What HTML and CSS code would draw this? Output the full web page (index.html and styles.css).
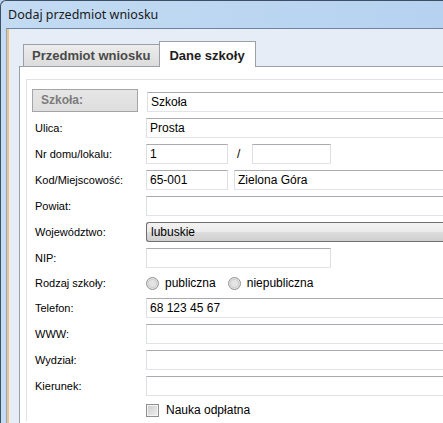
FILE: index.html
```html
<!DOCTYPE html>
<html lang="pl">
<head>
  <meta charset="UTF-8">
  <title>Dodaj przedmiot wniosku</title>
  <link rel="stylesheet" href="styles.css">
</head>
<body>
  <div class="window">
    <div class="titlebar">Dodaj przedmiot wniosku</div>
    <div class="frame">
      <div class="client">
        <div class="tabs">
          <span class="tab">Przedmiot wniosku</span>
          <span class="tab active">Dane szkoły</span>
        </div>
        <div class="panel">
          <div class="group">
            <div class="row">
              <span class="label head">Szkoła:</span>
              <span class="field">Szkoła</span>
            </div>
            <div class="row">
              <span class="label">Ulica:</span>
              <span class="field">Prosta</span>
            </div>
            <div class="row">
              <span class="label">Nr domu/lokalu:</span>
              <span class="field short">1</span>
              <span class="slash">/</span>
              <span class="field short2"></span>
            </div>
            <div class="row">
              <span class="label">Kod/Miejscowość:</span>
              <span class="field short">65-001</span>
              <span class="field city">Zielona Góra</span>
            </div>
            <div class="row">
              <span class="label">Powiat:</span>
              <span class="field"></span>
            </div>
            <div class="row">
              <span class="label">Województwo:</span>
              <span class="combo">lubuskie</span>
            </div>
            <div class="row">
              <span class="label">NIP:</span>
              <span class="field nip"></span>
            </div>
            <div class="row radios">
              <span class="label">Rodzaj szkoły:</span>
              <span class="radio"></span><span class="opt">publiczna</span>
              <span class="radio"></span><span class="opt">niepubliczna</span>
            </div>
            <div class="row">
              <span class="label">Telefon:</span>
              <span class="field">68 123 45 67</span>
            </div>
            <div class="row">
              <span class="label">WWW:</span>
              <span class="field"></span>
            </div>
            <div class="row">
              <span class="label">Wydział:</span>
              <span class="field"></span>
            </div>
            <div class="row">
              <span class="label">Kierunek:</span>
              <span class="field"></span>
            </div>
            <div class="row check">
              <span class="label"></span>
              <span class="checkbox"></span><span class="opt">Nauka odpłatna</span>
            </div>
          </div>
        </div>
      </div>
    </div>
  </div>
</body>
</html>
```

FILE: styles.css
```css
body {
  margin: 0;
  width: 443px;
  height: 423px;
  overflow: hidden;
  background: #bcd6f1;
  font-family: "Liberation Sans", Arial, sans-serif;
  font-size: 11px;
  color: #000000;
}

.window {
  box-sizing: border-box;
  width: 443px;
  height: 423px;
  overflow: hidden;
  display: flex;
  flex-direction: column;
  background: linear-gradient(90deg, #c3dbf3, #b6d2f0);
  border-top: 1px solid #3d4f63;
  border-left: 1px solid #3d4f63;
  border-top-left-radius: 6px;
}

.titlebar {
  height: 27px;
  line-height: 27px;
  padding-left: 7px;
  font-family: "Noto Sans", sans-serif;
  font-size: 12.5px;
  color: #1a1a1a;
}

.frame {
  flex: 1;
  margin-left: 5px;
  border-top: 1px solid #6c84a0;
  border-left: 1px solid #8ea6c3;
  display: flex;
}

.client {
  flex: 1;
  border-left: 2px solid #f2c47d;
  background: #e6edf7;
  padding: 12px 0 0 10px;
  display: flex;
  flex-direction: column;
}

/* tabs */
.tabs {
  display: flex;
  align-items: flex-end;
  padding-left: 4px;
  height: 25px;
  position: relative;
  z-index: 1;
}

.tab {
  height: 21px;
  line-height: 22px;
  padding: 0 9px 0 8px;
  border: 1px solid #9aa0a8;
  border-bottom: none;
  background: linear-gradient(#ececec, #dcdcdc);
  font-size: 13px;
  font-weight: bold;
  color: #4a4a4a;
}

.tab.active {
  height: 25px;
  line-height: 27px;
  padding: 0 10px 0 9px;
  margin-left: -1px;
  margin-bottom: -1px;
  background: #ffffff;
  color: #1e1e1e;
}

.panel {
  flex: 1;
  background: #ffffff;
  border-top: 1px solid #9aa0a8;
  border-left: 1px solid #9aa0a8;
  padding: 12px 0 0 6px;
}

.group {
  border-top: 1px solid #dfe2e6;
  border-left: 1px solid #dfe2e6;
  padding: 9px 0 0 6px;
}

/* rows */
.row {
  height: 26px;
  display: flex;
  align-items: center;
}

.row.radios {
  height: 24px;
}

.label {
  width: 111px;
  padding-left: 2px;
  flex: none;
}

.label.head {
  width: 96px;
  height: 21px;
  line-height: 21px;
  margin: -3px 9px 0 -1px;
  padding-left: 8px;
  border: 1px solid #a5a5a5;
  background: linear-gradient(#e6e6e6, #dedede);
  font-size: 12px;
  font-weight: bold;
  color: #7c7c7c;
}

.field {
  flex: 1;
  height: 18px;
  line-height: 18px;
  padding-left: 3px;
  border: 1px solid #dcdfe4;
  border-top-color: #a9abb1;
  border-bottom-color: #e0e4ea;
  border-right: none;
  background: #ffffff;
  font-size: 12px;
}

.field.short {
  flex: none;
  width: 77px;
  border-right: 1px solid #dcdfe4;
}

.field.short2 {
  flex: none;
  width: 74px;
  border-right: 1px solid #dcdfe4;
}

.field.nip {
  flex: none;
  width: 180px;
  border-right: 1px solid #dcdfe4;
}

.field.city {
  margin-left: 6px;
}

.slash {
  width: 15px;
  padding-left: 9px;
  font-size: 12px;
}

.combo {
  flex: 1;
  height: 18px;
  line-height: 18px;
  padding-left: 4px;
  border: 1px solid #707070;
  border-right: none;
  border-radius: 3px 0 0 3px;
  background: linear-gradient(#f3f3f3 0%, #ebebeb 48%, #dddddd 52%, #cfcfcf 100%);
  font-size: 12px;
}

.radio {
  width: 11px;
  height: 11px;
  border-radius: 50%;
  border: 1px solid #8e8f8f;
  background: radial-gradient(circle at 50% 50%, #e4e4e4 0 3px, #cfcfcf 4px, #f4f4f4 6px);
  margin-right: 6px;
}

.opt {
  font-size: 12px;
  margin-right: 12px;
}

.row.radios .radio:first-of-type {
  margin-left: 1px;
}

.row.check {
  height: 22px;
}

.checkbox {
  width: 11px;
  height: 11px;
  border: 1px solid #8e8f8f;
  background: linear-gradient(135deg, #cbcbcb, #f1f1f1);
  box-shadow: inset 0 0 0 1px #f4f4f4;
  margin-right: 7px;
}
```
